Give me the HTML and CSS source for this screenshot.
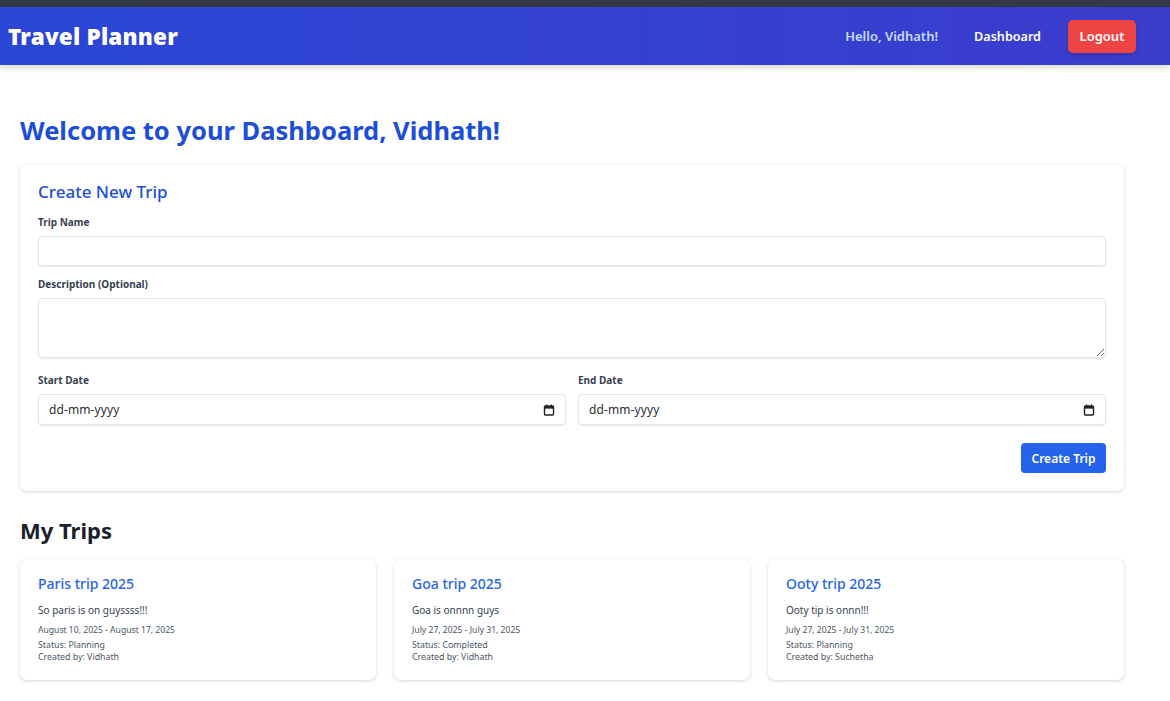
FILE: index.html
```html
<!DOCTYPE html>
<html lang="en">
<head>
<meta charset="utf-8">
<title>Travel Planner</title>
<link rel="stylesheet" href="styles.css">
</head>
<body>
<div class="topstrip"></div>
<header class="nav">
  <div class="brand">Travel Planner</div>
  <nav class="nav-right">
    <span class="hello">Hello, Vidhath!</span>
    <a class="nav-link">Dashboard</a>
    <button class="logout">Logout</button>
  </nav>
</header>
<main class="main">
  <h1 class="welcome">Welcome to your Dashboard, Vidhath!</h1>
  <section class="card form-card">
    <h2 class="card-title">Create New Trip</h2>
    <div class="field">
      <label class="label">Trip Name</label>
      <input class="input" type="text">
    </div>
    <div class="field">
      <label class="label">Description (Optional)</label>
      <textarea class="input textarea"></textarea>
    </div>
    <div class="date-row">
      <div class="field">
        <label class="label">Start Date</label>
        <div class="input date">
          <input class="date-text" type="text" placeholder="dd-mm-yyyy">
          <svg class="cal" width="12" height="12" viewBox="0 0 12 12"><rect x="1.5" y="2" width="9" height="9" rx="1" fill="none" stroke="#222" stroke-width="1.4"/><rect x="1.5" y="2" width="9" height="2.6" fill="#222"/><rect x="3" y="0.5" width="1.2" height="2" fill="#222"/><rect x="7.8" y="0.5" width="1.2" height="2" fill="#222"/></svg>
        </div>
      </div>
      <div class="field">
        <label class="label">End Date</label>
        <div class="input date">
          <input class="date-text" type="text" placeholder="dd-mm-yyyy">
          <svg class="cal" width="12" height="12" viewBox="0 0 12 12"><rect x="1.5" y="2" width="9" height="9" rx="1" fill="none" stroke="#222" stroke-width="1.4"/><rect x="1.5" y="2" width="9" height="2.6" fill="#222"/><rect x="3" y="0.5" width="1.2" height="2" fill="#222"/><rect x="7.8" y="0.5" width="1.2" height="2" fill="#222"/></svg>
        </div>
      </div>
    </div>
    <div class="actions">
      <button class="btn-primary">Create Trip</button>
    </div>
  </section>

  <h2 class="section-title">My Trips</h2>
  <div class="trips">
    <article class="card trip">
      <h3 class="trip-title">Paris trip 2025</h3>
      <p class="trip-desc">So paris is on guyssss!!!</p>
      <p class="trip-dates">August 10, 2025 - August 17, 2025</p>
      <p class="trip-meta">Status: Planning</p>
      <p class="trip-meta">Created by: Vidhath</p>
    </article>
    <article class="card trip">
      <h3 class="trip-title">Goa trip 2025</h3>
      <p class="trip-desc">Goa is onnnn guys</p>
      <p class="trip-dates">July 27, 2025 - July 31, 2025</p>
      <p class="trip-meta">Status: Completed</p>
      <p class="trip-meta">Created by: Vidhath</p>
    </article>
    <article class="card trip">
      <h3 class="trip-title">Ooty trip 2025</h3>
      <p class="trip-desc">Ooty tip is onnn!!!</p>
      <p class="trip-dates">July 27, 2025 - July 31, 2025</p>
      <p class="trip-meta">Status: Planning</p>
      <p class="trip-meta">Created by: Suchetha</p>
    </article>
  </div>
</main>
</body>
</html>
```
FILE: styles.css
```css
* { box-sizing: border-box; }
html, body { margin: 0; padding: 0; }
body {
  font-family: "Noto Sans", "Open Sans", sans-serif;
  background: #ffffff;
  color: #1f2937;
  width: 1170px;
  height: 701px;
  overflow: hidden;
}
.topstrip { height: 7px; background: #343a47; }
.nav {
  height: 58px;
  display: flex;
  align-items: center;
  justify-content: space-between;
  padding: 0 34px 0 8px;
  background: linear-gradient(90deg, #2a47d5 0%, #3c3ccc 100%);
  box-shadow: 0 3px 6px rgba(0,0,0,0.15);
  position: relative;
}
.brand {
  color: #fff;
  font-size: 22.5px;
  font-weight: 900;
  letter-spacing: 0.2px;
}
.nav-right { display: flex; align-items: center; }
.hello { color: #c7dbff; font-size: 13px; font-weight: 600; margin-right: 36px; }
.nav-link { color: #fff; font-size: 12.6px; font-weight: 600; margin-right: 27px; }
.logout {
  background: #ef4444;
  color: #fff;
  border: none;
  border-radius: 5px;
  font-family: inherit;
  font-size: 13px;
  font-weight: 600;
  width: 68px;
  height: 33px;
  box-shadow: 0 2px 4px rgba(0,0,0,0.15);
}
.main { width: 1104px; margin-left: 20px; padding-top: 47px; }
.welcome {
  margin: 0;
  color: #1d4ed8;
  font-size: 25.5px;
  font-weight: 700;
  line-height: 36px;
}
.card {
  background: #fff;
  border-radius: 7px;
  box-shadow: 0 1px 4px rgba(0,0,0,0.12), 0 1px 2px rgba(0,0,0,0.06);
}
.form-card { margin-top: 17px; padding: 14px 18px 18px; }
.card-title {
  margin: 0 0 10px;
  color: #1d4ed8;
  font-size: 17px;
  font-weight: 500;
  line-height: 26px;
}
.field { display: flex; flex-direction: column; margin-bottom: 11px; }
.label { font-size: 10px; font-weight: 700; color: #374151; line-height: 14px; margin-bottom: 7px; }
.input {
  height: 30px;
  border: 1px solid #e2e4e8;
  border-radius: 4px;
  box-shadow: 0 1px 2px rgba(0,0,0,0.08);
  font-family: inherit;
  font-size: 12px;
  padding: 0 10px;
  background: #fff;
}
.textarea { height: 60px; resize: vertical; }
.date-row { display: grid; grid-template-columns: 1fr 1fr; gap: 12px; padding-top: 4px; }
.date-row .field { margin-bottom: 18px; }
.date { height: 31px; display: flex; align-items: center; padding: 0 10px 0 0; }
.date-text {
  flex: 1;
  border: none;
  outline: none;
  background: transparent;
  font-family: inherit;
  font-size: 12px;
  padding: 0 0 0 10px;
  color: #222;
  letter-spacing: 0.1px;
}
.date-text::placeholder { color: #2b2f36; }
.cal { flex: none; }
.actions { display: flex; justify-content: flex-end; }
.btn-primary {
  background: #2563eb;
  color: #fff;
  border: none;
  border-radius: 4px;
  font-family: inherit;
  font-size: 12px;
  font-weight: 600;
  width: 85px;
  height: 30px;
}
.section-title {
  margin: 24px 0 0;
  font-size: 22px;
  font-weight: 700;
  color: #1a202c;
  line-height: 30px;
}
.trips { display: grid; grid-template-columns: repeat(3, 1fr); gap: 18px; margin-top: 14px; }
.trip { padding: 14px 18px 18px; height: 121px; }
.trip-title { margin: 0 0 7px; font-size: 14px; font-weight: 500; color: #2563eb; line-height: 22px; }
.trip-desc { margin: 0 0 6px; font-size: 10px; color: #374151; line-height: 16px; }
.trip-dates { margin: 0 0 2px; font-size: 8.6px; color: #4b5563; line-height: 13px; }
.trip-meta { margin: 0; font-size: 8.8px; color: #4b5563; line-height: 12px; }
```
